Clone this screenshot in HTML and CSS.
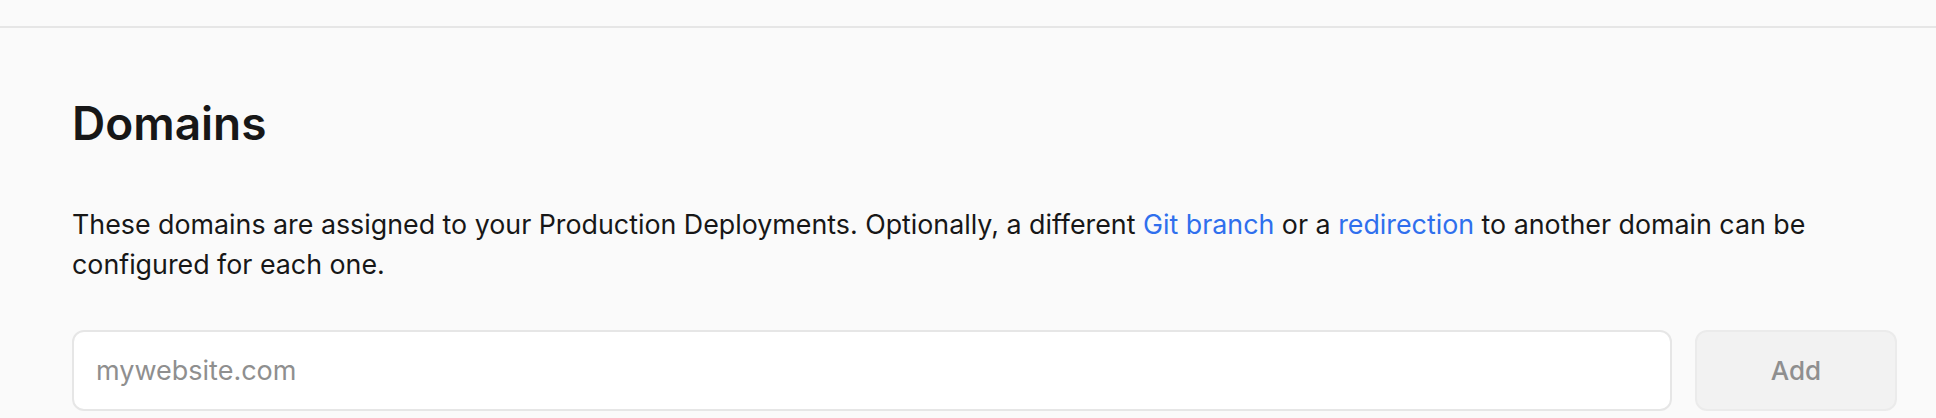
FILE: index.html
```html
<!DOCTYPE html>
<html lang="en">
<head>
<meta charset="utf-8">
<title>Domains</title>
<link rel="stylesheet" href="styles.css">
</head>
<body>
<div class="topbar"></div>
<main class="section">
  <h1 class="title">Domains</h1>
  <p class="desc">These domains are assigned to your Production Deployments. Optionally, a different <a class="link" href="#">Git branch</a> or a <a class="link" href="#">redirection</a> to another domain can be configured for each one.</p>
  <form class="add-row">
    <input class="domain-input" type="text" placeholder="mywebsite.com">
    <button class="add-btn" type="button" disabled>Add</button>
  </form>
</main>
</body>
</html>
```
FILE: styles.css
```css
* { box-sizing: border-box; }
html, body {
  margin: 0;
  padding: 0;
  background: #fafafa;
  font-family: Inter, "Noto Sans", sans-serif;
  color: #171717;
}
.topbar {
  height: 28px;
  border-bottom: 2px solid #e6e6e6;
}
.section {
  padding: 69px 39px 0 72px;
}
.title {
  margin: 0;
  font-size: 46px;
  line-height: 52px;
  font-weight: 600;
  letter-spacing: 0;
}
.desc {
  margin: 55px 0 0;
  font-size: 26.8px;
  line-height: 40px;
  font-weight: 400;
}
.link {
  color: #2f6fed;
  text-decoration: none;
}
.add-row {
  display: flex;
  gap: 23px;
  margin-top: 46px;
}
.domain-input {
  flex: 1;
  height: 81px;
  border: 2px solid #e6e6e6;
  border-radius: 12px;
  background: #fff;
  padding: 0 22px;
  font-family: Inter, "Noto Sans", sans-serif;
  font-size: 27px;
  color: #171717;
  outline: none;
}
.domain-input::placeholder {
  color: #8f8f8f;
}
.add-btn {
  width: 202px;
  height: 81px;
  border: 2px solid #ebebeb;
  border-radius: 12px;
  background: #f2f2f2;
  font-family: Inter, "Noto Sans", sans-serif;
  font-size: 26px;
  font-weight: 500;
  color: #8f8f8f;
}
```
